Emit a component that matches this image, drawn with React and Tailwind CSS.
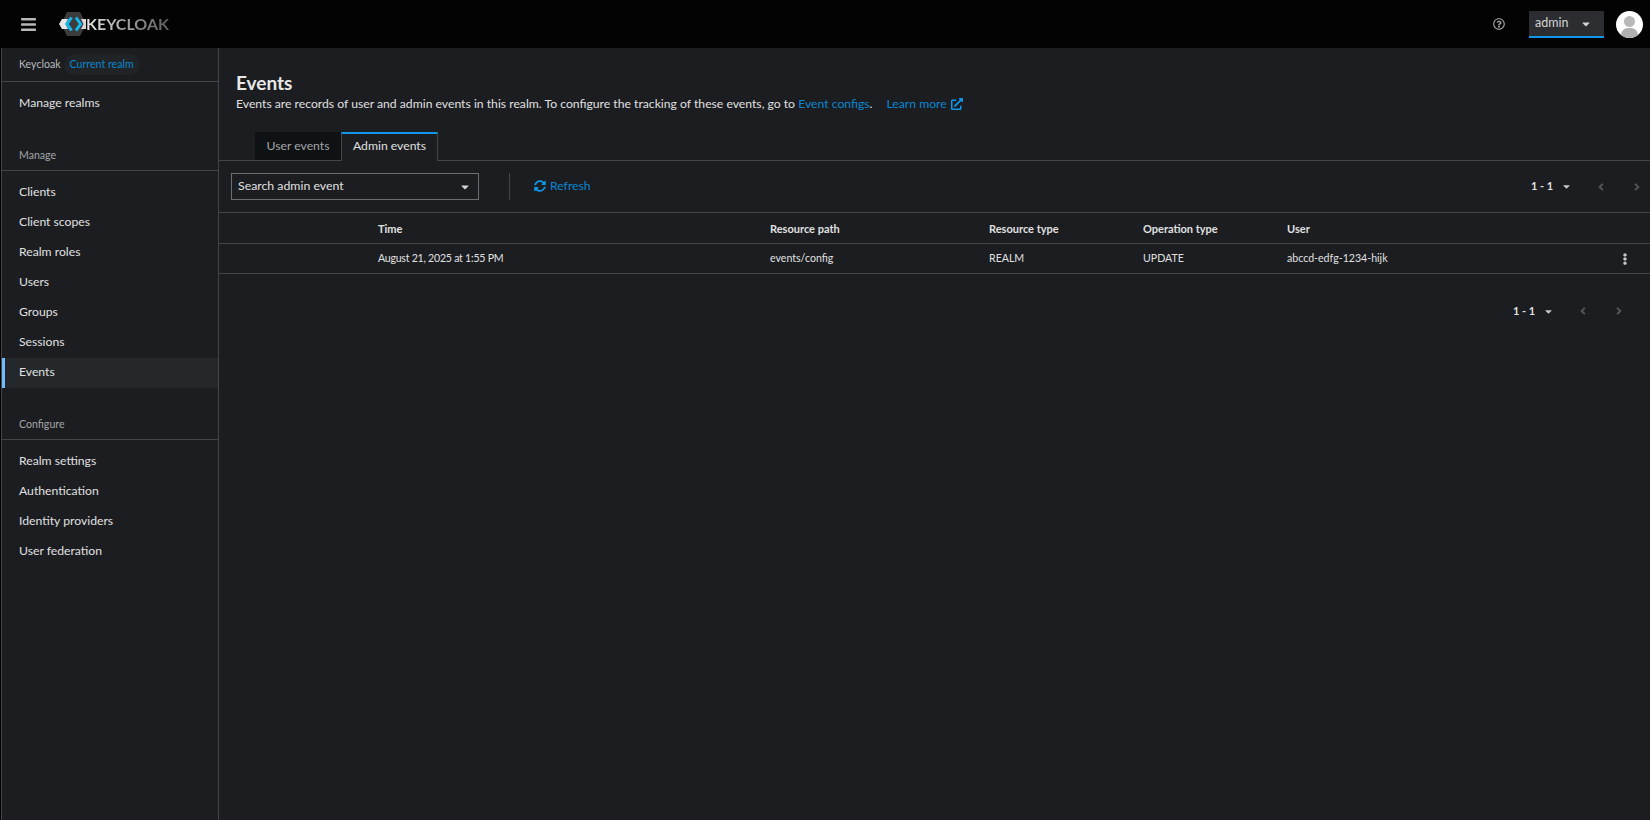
import { FaBars, FaCaretDown, FaAngleLeft, FaAngleRight, FaEllipsisV, FaExternalLinkAlt, FaRegQuestionCircle, FaSyncAlt } from 'react-icons/fa';

const manage = ['Clients', 'Client scopes', 'Realm roles', 'Users', 'Groups', 'Sessions', 'Events'];
const configure = ['Realm settings', 'Authentication', 'Identity providers', 'User federation'];

function Logo() {
  return (
    <div className="flex items-center">
      <svg width="27" height="24" viewBox="0 0 27 24" className="shrink-0">
        <polygon points="8,0 21,0 27,12 21,24 8,24 2,12" fill="#3c3c3f" />
        <polygon points="3,7 9,7 6.5,12 9,17 3,17 0,12" fill="#e6e6e6" />
        <polygon points="22,7 27,7 27,17 22,17 24.5,12" fill="#d8d8d8" />
        <polyline points="12.5,5.5 8,12 12.5,18.5" fill="none" stroke="#12bbea" strokeWidth="3" />
        <polyline points="17,5.5 21.5,12 17,18.5" fill="none" stroke="#12bbea" strokeWidth="3" />
      </svg>
      <span className="text-[16px] font-bold leading-none text-transparent bg-clip-text bg-gradient-to-r from-[#e8e8e8] to-[#5c5c5c]">KEYCLOAK</span>
    </div>
  );
}

function NavItem({ label, active }) {
  return (
    <div className={`h-[30px] pb-px flex items-center text-[12.2px] text-[#e0e0e0] ${active ? 'bg-[#24282b] border-l-[3px] border-[#73bcf7] pl-[14px]' : 'pl-[17px]'}`}>
      {label}
    </div>
  );
}

function Sidebar() {
  return (
    <aside className="w-[218px] ml-px shrink-0 bg-[#1b1d21] border-x border-[#444548] flex flex-col">
      <div className="h-[34px] shrink-0 border-b border-[#444548] flex items-center pl-[17px] gap-[3px] text-[10.6px]">
        <span className="text-[#b8bbbe]">Keycloak</span>
        <span className="h-[21px] px-[6px] rounded-full bg-[#212427] flex items-center text-[#0b87d0]">Current realm</span>
      </div>
      <div className="mt-[7px]">
        <NavItem label="Manage realms" />
      </div>
      <div className="mt-[29px] h-[23px] pl-[17px] border-b border-[#444548] text-[10.6px] text-[#a3a5a8]">Manage</div>
      <div className="mt-[7px]">
        {manage.map((label) => (
          <NavItem key={label} label={label} active={label === 'Events'} />
        ))}
      </div>
      <div className="mt-[29px] h-[23px] pl-[17px] border-b border-[#444548] text-[10.6px] text-[#a3a5a8]">Configure</div>
      <div className="mt-[7px]">
        {configure.map((label) => (
          <NavItem key={label} label={label} />
        ))}
      </div>
    </aside>
  );
}

function Pagination({ className }) {
  return (
    <div className={`flex items-center text-[#e0e0e0] ${className}`}>
      <span className="w-[18px] text-[11px] font-bold whitespace-nowrap">1 - 1</span>
      <FaCaretDown className="ml-[12px] w-[11px] h-[11px] text-[#c7c7c7]" />
      <FaAngleLeft className="ml-[23px] w-[12px] h-[12px] text-[#54565a]" />
      <FaAngleRight className="ml-[24px] w-[12px] h-[12px] text-[#54565a]" />
    </div>
  );
}

const colTime = 'w-[392px] shrink-0';
const colPath = 'w-[219px] shrink-0';
const colType = 'w-[154px] shrink-0';
const colOp = 'w-[144px] shrink-0';

function Events() {
  return (
    <main className="flex-1 min-w-0 bg-[#1b1d21] text-[#e0e0e0]">
      <div className="pl-[17px] pt-[24px] h-[84px]">
        <h1 className="text-[19px] font-bold leading-[22px] text-[#e8e8e8]">Events</h1>
        <p className="text-[12.2px] leading-[18px] mt-[1px] flex items-center whitespace-nowrap">
          <span>Events are records of user and admin events in this realm. To configure the tracking of these events, go to&nbsp;</span>
          <span className="text-[#0b87d0]">Event configs</span>
          <span>.</span>
          <span className="ml-[14px] text-[#0b87d0]">Learn more</span>
          <FaExternalLinkAlt className="ml-[4px] w-[12px] h-[12px] text-[#1196e8]" />
        </p>
      </div>
      <div className="h-[29px] border-b border-[#444548] pl-[36px] flex items-stretch text-[12.2px]">
        <div className="w-[86px] bg-[#0f1214] flex items-center justify-center text-[#a3a5a8]">User events</div>
        <div className="w-[97px] h-[29px] border-x border-[#444548] border-t-2 border-t-[#1196e8] pb-[2px] bg-[#1b1d21] flex items-center justify-center">Admin events</div>
      </div>
      <div className="h-[52px] border-b border-[#444548] flex items-center pl-[12px]">
        <div className="w-[248px] h-[27px] border border-[#6a6e73] flex items-center justify-between pl-[6px] pr-[7px] text-[12.3px]">
          <span>Search admin event</span>
          <FaCaretDown className="w-[12px] h-[12px] text-[#d2d2d2]" />
        </div>
        <div className="ml-[30px] w-px h-[27px] bg-[#444548]" />
        <div className="ml-[24px] flex items-center gap-[4px] text-[12.2px] text-[#0b87d0]">
          <FaSyncAlt className="w-[12px] h-[12px] text-[#1196e8]" />
          <span>Refresh</span>
        </div>
        <Pagination className="ml-auto mr-[7px]" />
      </div>
      <div className="h-[31px] pt-[2px] border-b border-[#444548] flex items-center pl-[159px] text-[11px] font-bold">
        <div className={colTime}>Time</div>
        <div className={colPath}>Resource path</div>
        <div className={colType}>Resource type</div>
        <div className={colOp}>Operation type</div>
        <div>User</div>
      </div>
      <div className="h-[30px] border-b border-[#444548] flex items-center pl-[159px] text-[10.6px]">
        <div className={`${colTime} tracking-[-0.25px]`}>August 21, 2025 at 1:55 PM</div>
        <div className={colPath}>events/config</div>
        <div className={colType}>REALM</div>
        <div className={colOp}>UPDATE</div>
        <div>abccd-edfg-1234-hijk</div>
        <FaEllipsisV className="ml-auto mr-[19px] w-[12px] h-[12px] text-[#c7c7c7]" />
      </div>
      <div className="mt-[29px] flex justify-end">
        <Pagination className="mr-[25px]" />
      </div>
    </main>
  );
}

export default function App() {
  return (
    <div className="h-screen bg-black flex flex-col overflow-hidden font-['Lato',sans-serif]">
      <header className="h-[48px] shrink-0 bg-[#030303] flex items-center">
        <FaBars className="ml-[20px] w-[17px] h-[17px] text-[#b8b8b8]" />
        <div className="ml-[22px]">
          <Logo />
        </div>
        <FaRegQuestionCircle className="ml-auto w-[12px] h-[12px] text-[#a8a8a8]" />
        <div className="ml-[24px] w-[75px] h-[27px] bg-[#2b2d31] border-b-2 border-[#1196e8] flex items-center justify-between pl-[6px] pr-[12px] text-[12.5px] text-[#d2d2d2] mb-[-1px]">
          <span>admin</span>
          <FaCaretDown className="w-[12px] h-[12px] text-[#d2d2d2]" />
        </div>
        <div className="ml-[12px] mr-[7px] w-[27px] h-[27px] rounded-full bg-white relative overflow-hidden">
          <div className="absolute left-[8px] top-[5px] w-[11px] h-[11px] rounded-full bg-[#b8b8b8]" />
          <div className="absolute left-[5px] top-[17px] w-[17px] h-[14px] rounded-t-[7px] bg-[#b0b0b0]" />
        </div>
      </header>
      <div className="flex-1 min-h-0 flex">
        <Sidebar />
        <Events />
      </div>
    </div>
  );
}
